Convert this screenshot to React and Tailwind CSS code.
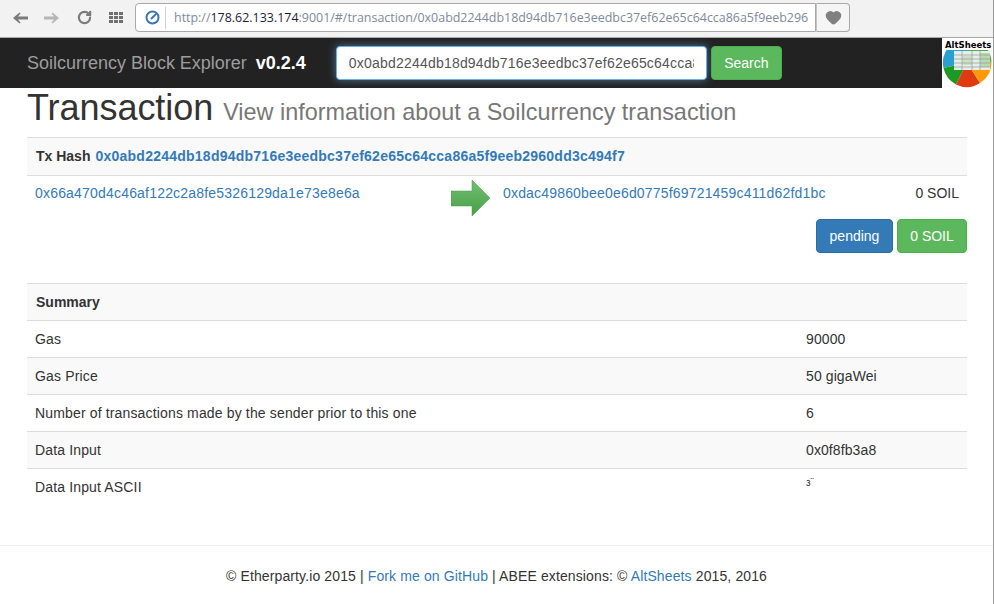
import React from 'react';
import { RotateCw, Heart } from 'lucide-react';

const url = '0x0abd2244db18d94db716e3eedbc37ef62e65c64cca86a5f9eeb2960dd3c494f7';

const rows = [
  { label: 'Gas', value: '90000' },
  { label: 'Gas Price', value: '50 gigaWei', striped: true },
  { label: 'Number of transactions made by the sender prior to this one', value: '6' },
  { label: 'Data Input', value: '0x0f8fb3a8', striped: true },
  { label: 'Data Input ASCII', value: 'з¨', tiny: true },
];

function NavArrow({ color, flip }) {
  return (
    <svg width="15" height="12" viewBox="0 0 15 12" className={`shrink-0 ${flip ? 'rotate-180' : ''}`}>
      <path d="M0 6 L6.5 0.5 L7.5 1.5 L5 4.5 H15 V7.5 H5 L7.5 10.5 L6.5 11.5 Z" fill={color} />
    </svg>
  );
}

function Logo() {
  return (
    <div className="relative w-[51px] h-[50px] bg-white shrink-0 overflow-hidden">
      <svg width="51" height="50" viewBox="0 0 51 50" className="absolute left-0 top-0">
        <path d="M25 24.5 L25 0 A24.5 24.5 0 0 0 1.5 30 Z" fill="#2a9fd0" />
        <path d="M25 24.5 L1.5 30 A24.5 24.5 0 0 0 14 46.5 Z" fill="#1e9a24" />
        <path d="M25 24.5 L14 46.5 A24.5 24.5 0 0 0 38 45 Z" fill="#e03a12" />
        <path d="M25 24.5 L38 45 A24.5 24.5 0 0 0 49.5 24.5 Z" fill="#fb9a05" />
        <path d="M25 24.5 L49.5 24.5 A24.5 24.5 0 0 0 25 0 Z" fill="#5da83f" />
        <rect x="0" y="0" width="51" height="12" fill="#fff" />
        <rect x="12" y="13" width="36" height="19" fill="#e6eeea" />
        <rect x="20" y="18" width="10" height="9" fill="#cfe0c4" />
        <rect x="38" y="15" width="10" height="14" fill="#bcd8b0" />
        <path d="M12 17 H48 M12 21 H48 M12 25 H48 M12 29 H48 M20 13 V32 M30 13 V32 M38 13 V32" stroke="#8d9c94" strokeWidth="0.7" />
      </svg>
      <div className="absolute left-[3px] top-[2px] text-[8.5px] leading-[11px] font-bold text-black font-['DejaVu_Sans',sans-serif]">AltSheets</div>
    </div>
  );
}

export default function App() {
  return (
    <div className="w-[994px] h-[604px] overflow-hidden bg-white text-[14px] leading-[20px] text-[#333] font-['Liberation_Sans',Arial,sans-serif] border-r border-[#9a9a9a]">
      {/* Browser bar */}
      <div className="h-[38px] bg-[#f2f2f2] border-b border-[#a9a9a9] flex items-center pl-[13px] pb-[2px]">
        <NavArrow color="#7b7b7b" />
        <div className="ml-[16px]"><NavArrow color="#b5b5b5" flip /></div>
        <RotateCw className="w-[15px] h-[15px] text-[#7b7b7b] ml-[18px] shrink-0" strokeWidth={3.5} />
        <div className="grid grid-cols-3 gap-[1px] ml-[17px] shrink-0">
          {[0, 1, 2, 3, 4, 5, 6, 7, 8].map((i) => (
            <span key={i} className="w-[4px] h-[3px] bg-[#6f6f6f]" />
          ))}
        </div>
        <div className="ml-[12px] h-[29px] w-[681px] shrink-0 bg-white border border-[#a9a9a9] rounded-l-[4px] flex items-center overflow-hidden">
          <svg width="15" height="15" viewBox="0 0 15 15" className="ml-[9px] shrink-0">
            <circle cx="7.5" cy="7.5" r="6" fill="none" stroke="#3f74b5" strokeWidth="2" />
            <path d="M6.5 8.5 L10.5 4.5" stroke="#3f74b5" strokeWidth="2" strokeLinecap="round" />
          </svg>
          <span className="w-px h-[22px] bg-[#cfcfcf] ml-[5px] shrink-0" />
          <div className="ml-[8px] w-[634px] overflow-hidden whitespace-nowrap font-['Open_Sans',sans-serif] text-[12.45px] text-[#7d8a99]">
            http://<span className="text-[#1c1c3a]">178.62.133.174</span>:9001/#/transaction/{url}
          </div>
        </div>
        <div className="h-[29px] w-[34px] shrink-0 bg-[#f5f5f5] border border-l-[#c4c4c4] border-[#a9a9a9] rounded-r-[4px] flex items-center justify-center">
          <Heart className="w-[17px] h-[17px] text-[#808080] fill-[#808080]" />
        </div>
      </div>

      {/* Navbar */}
      <div className="h-[50px] bg-[#222] flex items-center pl-[27px]">
        <span className="text-[18px] text-[#9d9d9d] tracking-[-0.01px]">Soilcurrency Block Explorer</span>
        <span className="ml-[9px] text-[18px] font-bold text-white">v0.2.4</span>
        <div className="ml-[30px] w-[371px] h-[34px] bg-white rounded-[4px] border border-[#66afe9] shadow-[0_0_8px_rgba(102,175,233,0.6)] pl-[12px] pr-[12px] flex items-center">
          <div className="overflow-hidden whitespace-nowrap text-[#555] tracking-[0.2px]">{url}</div>
        </div>
        <button className="ml-[4px] h-[34px] w-[71px] bg-[#5cb85c] border border-[#4cae4c] rounded-[4px] text-white">Search</button>
        <div className="ml-auto">
          <Logo />
        </div>
      </div>

      {/* Content */}
      <div className="pl-[27px] pr-[26px]">
        <h1 className="text-[36px] leading-[40px] h-[49px] text-[#333] tracking-[-0.05px]">
          Transaction <small className="text-[23.4px] text-[#777] tracking-[0px]">View information about a Soilcurrency transaction</small>
        </h1>

        <div className="border-t border-[#ddd] h-[38px] bg-[#f9f9f9] flex items-center pl-[9px] pb-[2px] font-bold">
          <span>Tx Hash</span>
          <a className="ml-[5px] text-[#337ab7] tracking-[0.24px]">{url}</a>
        </div>
        <div className="border-t border-[#ddd] h-[44px] flex pt-[7px] px-[8px]">
          <a className="w-[416px] text-[#337ab7] tracking-[0.19px]">0x66a470d4c46af122c2a8fe5326129da1e73e8e6a</a>
          <svg width="39" height="36" viewBox="0 0 39 36" className="shrink-0 -mt-[3px]">
            <defs>
              <linearGradient id="arrowFill" x1="0" y1="0" x2="0" y2="1">
                <stop offset="0" stopColor="#72c072" />
                <stop offset="1" stopColor="#469f46" />
              </linearGradient>
            </defs>
            <path d="M0 11 H21 V0 L39 18 L21 36 V26 H0 Z" fill="url(#arrowFill)" stroke="#4a9a4a" strokeWidth="0.5" />
          </svg>
          <a className="ml-[13px] text-[#337ab7] tracking-[0.18px]">0xdac49860bee0e6d0775f69721459c411d62fd1bc</a>
          <span className="ml-auto">0 SOIL</span>
        </div>
        <div className="flex justify-end gap-[4px] h-[64px]">
          <span className="h-[34px] w-[77px] bg-[#337ab7] border border-[#2e6da4] rounded-[4px] text-white flex items-center justify-center">pending</span>
          <span className="h-[34px] w-[70px] bg-[#5cb85c] border border-[#4cae4c] rounded-[4px] text-white flex items-center justify-center">0 SOIL</span>
        </div>

        {/* Summary */}
        <div className="border-t border-[#ddd] h-[37px] bg-[#f9f9f9] flex items-center px-[9px] font-bold">Summary</div>
        {rows.map((row) => (
          <div key={row.label} className={`border-t border-[#ddd] h-[37px] flex items-center px-[8px] ${row.striped ? 'bg-[#f9f9f9]' : ''}`}>
            <span className="w-[771px] tracking-[0.15px]">{row.label}</span>
            <span className={row.tiny ? 'text-[10px] leading-[10px] self-start mt-[9px]' : 'tracking-[0.1px]'}>{row.value}</span>
          </div>
        ))}
      </div>

      {/* Footer */}
      <div className="mt-[40px] border-t border-[#eee] pt-[20px] text-center tracking-[0.12px]">
        © Etherparty.io 2015 | <a className="text-[#337ab7]">Fork me on GitHub</a> | ABEE extensions: © <a className="text-[#337ab7]">AltSheets</a> 2015, 2016
      </div>
    </div>
  );
}
